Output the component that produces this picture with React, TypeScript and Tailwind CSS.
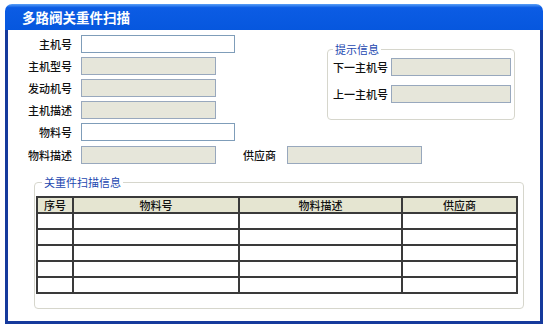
const inputWhite = "h-[18px] border border-[#7f9db9] bg-white";
const inputGray = "h-[18px] border border-[#98a8bd] bg-[#e6e6da]";
const cell = "border-2 border-[#3a3a3a] p-0";

function FormRow({ label, wide }: { label: string; wide?: boolean }) {
  return (
    <div className="flex items-center h-[18px]">
      <span className="w-[64px] text-right">{label}</span>
      <div className={`ml-[9px] ${wide ? `w-[154px] ${inputWhite}` : `w-[135px] ${inputGray}`}`} />
    </div>
  );
}

function HintRow({ label }: { label: string }) {
  return (
    <div className="flex items-center justify-end h-[18px] pr-[3px]">
      <span>{label}</span>
      <div className={`ml-[3px] w-[120px] ${inputGray}`} />
    </div>
  );
}

const rows = [0, 1, 2, 3, 4];

export default function App() {
  return (
    <div className="w-[548px] h-[330px] bg-white pt-[4px] pl-[5px] font-['Noto_Sans_CJK_SC',sans-serif] font-medium text-[11px] leading-[13px] text-[#111]">
      <div className="w-[538px] h-[320px] flex flex-col rounded-t-[7px] overflow-hidden">
        <div className="h-[26px] flex items-center pl-[17px] bg-[linear-gradient(to_bottom,#5aa0f7_0%,#0c5ce4_14%,#0657de_100%)]">
          <span className="text-white font-bold text-[13.5px] leading-[16px]">多路阀关重件扫描</span>
        </div>
        <div className="flex-1 flex flex-col bg-white border-x-[3px] border-b-[3px] border-[#163a9c] pt-[5px]">
          <div className="flex items-start">
            <div className="w-[227px] flex flex-col gap-[4px]">
              <FormRow label="主机号" wide />
              <FormRow label="主机型号" />
              <FormRow label="发动机号" />
              <FormRow label="主机描述" />
              <FormRow label="物料号" wide />
            </div>
            <fieldset className="ml-[92px] mt-[8px] w-[188px] border border-[#d6d6cc] rounded-[4px] pt-[2px] pb-[16px] flex flex-col gap-[9px]">
              <legend className="ml-[5px] px-[2px] text-[#1c47b0] font-normal">提示信息</legend>
              <HintRow label="下一主机号" />
              <HintRow label="上一主机号" />
            </fieldset>
          </div>
          <div className="flex items-center h-[18px] mt-[5px]">
            <span className="w-[64px] text-right">物料描述</span>
            <div className={`ml-[9px] w-[135px] ${inputGray}`} />
            <span className="ml-[27px]">供应商</span>
            <div className={`ml-[11px] w-[135px] ${inputGray}`} />
          </div>
          <fieldset className="ml-[26px] mt-[12px] w-[488px] border border-[#d6d6cc] rounded-[4px] pt-[7px] pl-[1px] pr-[5px] pb-[14px]">
            <legend className="ml-[6px] px-[2px] text-[#1c47b0] font-normal">关重件扫描信息</legend>
            <table className="border-collapse w-[480px] table-fixed">
              <colgroup>
                <col className="w-[36px]" />
                <col className="w-[166px]" />
                <col className="w-[163px]" />
                <col className="w-[115px]" />
              </colgroup>
              <thead>
                <tr className="h-[16px] bg-[#e5e5d1]">
                  <th className={`${cell} font-medium text-center`}>序号</th>
                  <th className={`${cell} font-medium text-center`}>物料号</th>
                  <th className={`${cell} font-medium text-center`}>物料描述</th>
                  <th className={`${cell} font-medium text-center`}>供应商</th>
                </tr>
              </thead>
              <tbody>
                {rows.map((r) => (
                  <tr key={r} className="h-[16px]">
                    <td className={cell} />
                    <td className={cell} />
                    <td className={cell} />
                    <td className={cell} />
                  </tr>
                ))}
              </tbody>
            </table>
          </fieldset>
        </div>
      </div>
    </div>
  );
}
